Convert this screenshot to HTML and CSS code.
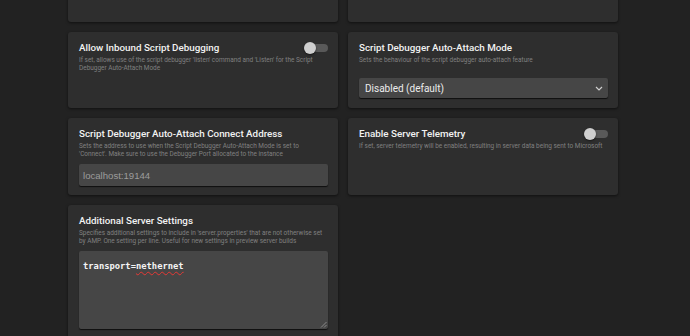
FILE: index.html
```html
<!DOCTYPE html>
<html>
<head>
<meta charset="utf-8">
<link rel="stylesheet" href="styles.css">
</head>
<body>
<div class="page">
  <div class="grid">
    <div class="card card-top"></div>
    <div class="card card-top"></div>

    <div class="card">
      <div class="head">
        <div class="title">Allow Inbound Script Debugging</div>
        <div class="toggle"><span class="knob"></span></div>
      </div>
      <div class="desc">If set, allows use of the script debugger 'listen' command and 'Listen' for the Script Debugger Auto-Attach Mode</div>
    </div>

    <div class="card">
      <div class="head">
        <div class="title">Script Debugger Auto-Attach Mode</div>
      </div>
      <div class="desc">Sets the behaviour of the script debugger auto-attach feature</div>
      <div class="select">
        <span>Disabled (default)</span>
        <svg class="chev" width="8" height="5" viewBox="0 0 8 5"><path d="M1 1 L4 4 L7 1" fill="none" stroke="#cfcfcf" stroke-width="1.2"/></svg>
      </div>
    </div>

    <div class="card">
      <div class="head">
        <div class="title">Script Debugger Auto-Attach Connect Address</div>
      </div>
      <div class="desc">Sets the address to use when the Script Debugger Auto-Attach Mode is set to 'Connect'. Make sure to use the Debugger Port allocated to the instance</div>
      <div class="input">localhost:19144</div>
    </div>

    <div class="card">
      <div class="head">
        <div class="title">Enable Server Telemetry</div>
        <div class="toggle"><span class="knob"></span></div>
      </div>
      <div class="desc">If set, server telemetry will be enabled, resulting in server data being sent to Microsoft</div>
    </div>

    <div class="card card-last">
      <div class="head">
        <div class="title">Additional Server Settings</div>
      </div>
      <div class="desc">Specifies additional settings to include in 'server.properties' that are not otherwise set by AMP. One setting per line. Useful for new settings in preview server builds</div>
      <div class="textarea">
        <span class="code">transport=<span class="spell">nethernet</span></span>
        <svg class="grip" width="7" height="7" viewBox="0 0 7 7"><path d="M6.5 1 L1 6.5 M6.5 4 L4 6.5" stroke="#9a9a9a" stroke-width="0.8"/></svg>
      </div>
    </div>
  </div>
</div>
</body>
</html>
```
FILE: styles.css
```css
html, body {
  margin: 0;
  padding: 0;
  background: #222222;
  overflow: hidden;
}
body {
  width: 690px;
  height: 336px;
  font-family: Roboto, "Noto Sans", sans-serif;
}
.page {
  padding-left: 68px;
  margin-top: -38px;
}
.grid {
  display: grid;
  grid-template-columns: 270px 270px;
  grid-template-rows: 60px 76px 77px auto;
  column-gap: 10px;
  row-gap: 10px;
}
.card {
  background: #2e2e2e;
  border-radius: 3px;
  box-shadow: 0 1px 3px rgba(0, 0, 0, 0.55);
  padding: 9px 10px 10px 11px;
  box-sizing: border-box;
  position: relative;
}
.card-top {
  padding: 0;
}
.card-last {
  height: 160px;
}
.head {
  display: flex;
  justify-content: space-between;
  align-items: center;
  height: 13px;
}
.title {
  color: #f2f2f2;
  font-size: 9.8px;
  font-weight: 500;
  line-height: 13px;
  white-space: nowrap;
}
.toggle {
  width: 23px;
  height: 8px;
  background: #595959;
  border-radius: 4px;
  position: relative;
}
.knob {
  position: absolute;
  left: -1px;
  top: -2px;
  width: 12px;
  height: 12px;
  border-radius: 50%;
  background: #cfcfcf;
  box-shadow: 0 1px 2px rgba(0, 0, 0, 0.5);
}
.desc {
  color: #808080;
  font-size: 6.45px;
  line-height: 8px;
  min-height: 16px;
  margin-top: 2px;
}
.select {
  margin-top: 6px;
  height: 20px;
  background: #464646;
  border-radius: 2px;
  box-shadow: 0 1px 1px rgba(0, 0, 0, 0.7);
  display: flex;
  align-items: center;
  justify-content: space-between;
  padding: 0 5px 0 6px;
  color: #ececec;
  font-size: 10px;
}
.chev {
  display: block;
}
.input {
  margin-top: 6px;
  height: 22px;
  background: #464646;
  border-radius: 2px;
  box-shadow: 0 1px 1px rgba(0, 0, 0, 0.7);
  display: flex;
  align-items: center;
  padding-left: 4px;
  color: #9c9c9c;
  font-family: "Liberation Sans", Arial, sans-serif;
  font-size: 9.6px;
}
.textarea {
  margin-top: 6px;
  height: 78px;
  background: #464646;
  border-radius: 2px;
  box-shadow: 0 1px 1px rgba(0, 0, 0, 0.7);
  padding: 3px 4px;
  box-sizing: border-box;
  position: relative;
}
.code {
  font-family: "DejaVu Sans Mono", monospace;
  font-weight: bold;
  font-size: 8.8px;
  color: #f4f4f4;
  line-height: 12px;
}
.spell {
  text-decoration: underline wavy #e53935;
  text-decoration-thickness: 1px;
  text-underline-offset: 1.5px;
}
.grip {
  position: absolute;
  right: 1px;
  bottom: 1px;
}
```
